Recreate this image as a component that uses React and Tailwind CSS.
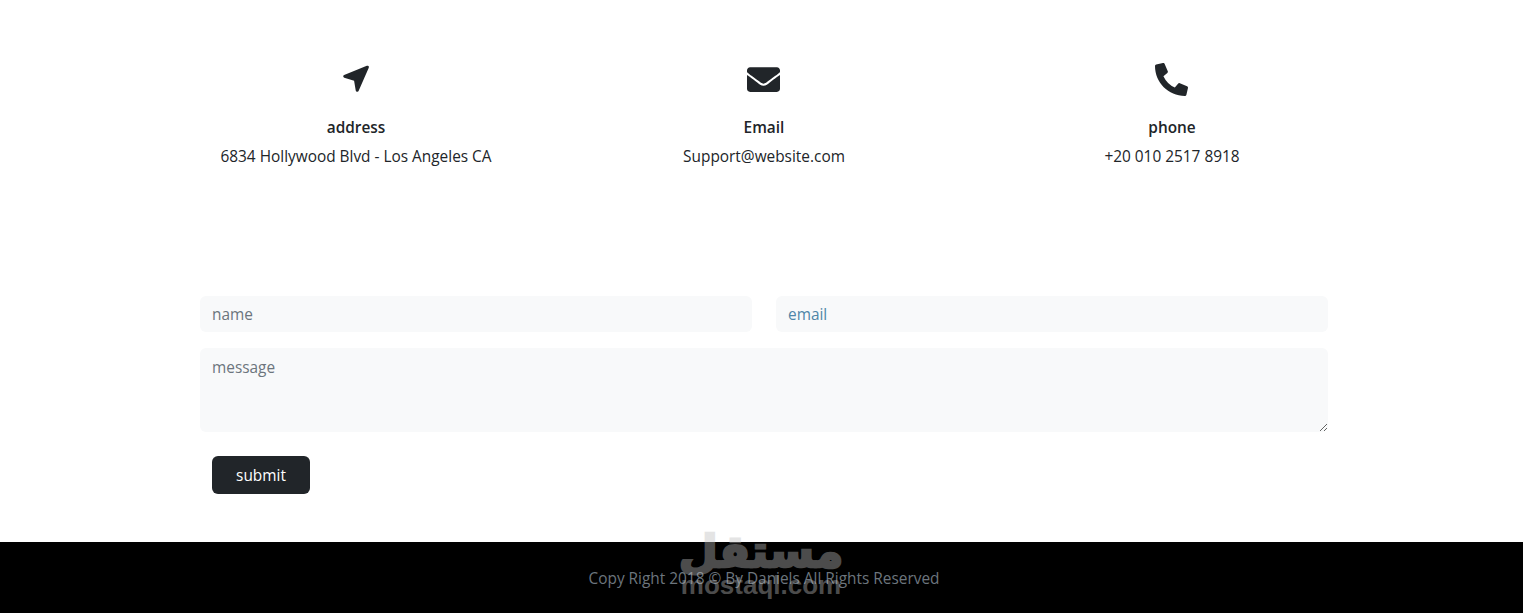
import React from "react";
import { FaEnvelope, FaPhoneAlt } from "react-icons/fa";

const font = "font-['Open_Sans','Noto_Sans',sans-serif]";

// FA's location arrow is too fat here, so this one is drawn by hand
const ArrowIcon = () => (
  <svg width="28" height="28" viewBox="0 0 28 28" className="text-[#212529]">
    <path
      d="M25.4 2.2 2.7 11.3 13.4 14.6 15.2 25.3Z"
      fill="currentColor"
      stroke="currentColor"
      strokeWidth="3"
      strokeLinejoin="round"
    />
  </svg>
);

const infoItems = [
  { icon: <ArrowIcon />, title: "address", text: "6834 Hollywood Blvd - Los Angeles CA" },
  { icon: <FaEnvelope size={33} className="mr-px text-[#212529]" />, title: "Email", text: "Support@website.com" },
  { icon: <FaPhoneAlt size={33} className="mr-px text-[#212529]" />, title: "phone", text: "+20 010 2517 8918" },
];

const InfoItem = ({ item }) => (
  <div className="flex flex-col items-center">
    <div className="flex h-8 items-center justify-center">{item.icon}</div>
    <h3 className="mt-[21px] text-[15.4px] leading-6 font-semibold text-[#212529]">{item.title}</h3>
    <p className="mt-[5px] text-[15.4px] leading-6 text-[#212529]">{item.text}</p>
  </div>
);

export default function App() {
  return (
    <div className={`relative overflow-hidden bg-white ${font}`}>
      {/* Contact info */}
      <section className="ml-[152px] grid w-[1224px] grid-cols-3 pt-[63px]">
        {infoItems.map((item) => (
          <InfoItem key={item.title} item={item} />
        ))}
      </section>

      {/* Form */}
      <form className="mt-[127px] ml-[200px] w-[1128px]">
        <div className="flex gap-6">
          <input
            placeholder="name"
            className="h-9 flex-1 rounded-md bg-[#f8f9fa] px-3 text-[15.4px] outline-none placeholder:text-[#6c757d]"
          />
          <input
            placeholder="email"
            className="h-9 flex-1 rounded-md bg-[#f8f9fa] px-3 text-[15.4px] outline-none placeholder:text-[#4f86a8]"
          />
        </div>
        <textarea
          placeholder="message"
          className="mt-4 block h-[84px] w-full rounded-md bg-[#f8f9fa] px-3 pt-2 pb-1.5 text-[15.4px] leading-6 outline-none placeholder:text-[#6c757d]"
        />
        <button
          type="button"
          className="mt-6 ml-3 h-[38px] w-[98px] rounded-md bg-[#212529] pt-px text-[15.4px] text-white"
        >
          submit
        </button>
      </form>

      {/* Footer */}
      <footer className="mt-12 flex h-[71px] items-center justify-center bg-black pt-[3px] pl-[5px]">
        <p className="text-[15.4px] text-[#6c757d]">Copy Right 2018 © By Daniels All Rights Reserved</p>
      </footer>

      {/* Watermark */}
      <div className="absolute top-[526px] left-[680px] flex w-[162px] flex-col items-center opacity-40">
        <span
          dir="rtl"
          className="font-['DejaVu_Sans',sans-serif] text-[45px] leading-[52px] font-bold text-[#bebebe] [-webkit-text-stroke:2.5px_#bebebe]"
        >
          مستقل
        </span>
        <span className="-mt-[6px] font-['Liberation_Sans',sans-serif] text-[26px] leading-[26px] font-bold text-[#bebebe]">
          mostaql.com
        </span>
      </div>
    </div>
  );
}
